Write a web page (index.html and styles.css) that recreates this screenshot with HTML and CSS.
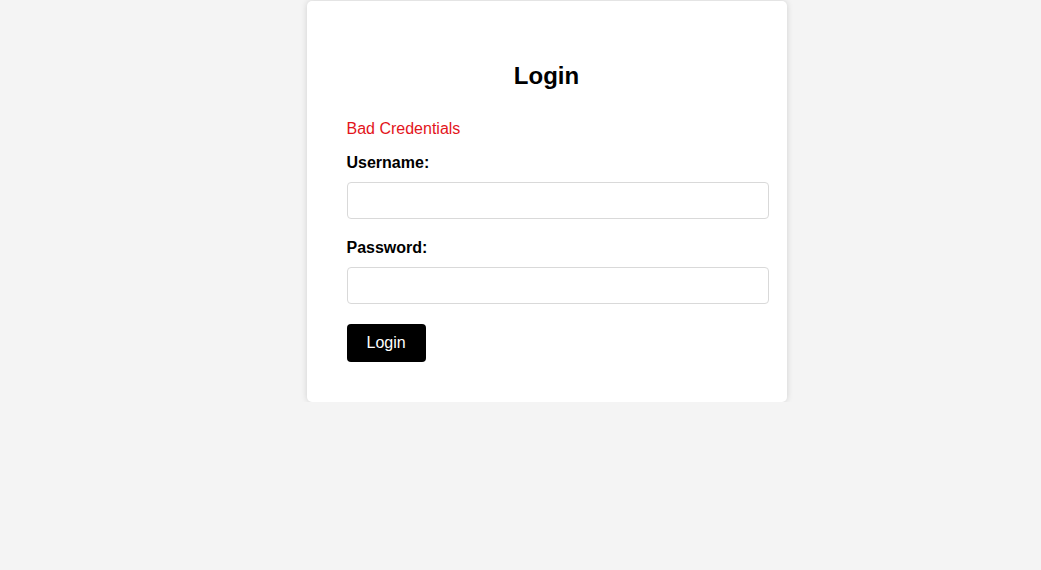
FILE: index.html
```html
<!DOCTYPE html>
<html lang="en">
<head>
<meta charset="utf-8">
<title>Login</title>
<link rel="stylesheet" href="styles.css">
</head>
<body>
<div class="card">
  <h2 class="title">Login</h2>
  <div class="error">Bad Credentials</div>
  <form class="form">
    <label class="label" for="username">Username:</label>
    <input class="input" type="text" id="username" name="username">
    <label class="label" for="password">Password:</label>
    <input class="input" type="password" id="password" name="password">
    <button class="btn" type="button">Login</button>
  </form>
</div>
</body>
</html>
```

FILE: styles.css
```css
html, body {
  margin: 0;
  padding: 0;
}
body {
  background: #f4f4f4;
  font-family: "Liberation Sans", Arial, sans-serif;
  font-size: 16px;
  color: #000;
  padding-top: 1px;
}
.card {
  width: 400px;
  margin: 0 0 0 calc(50% - 214px);
  padding: 40px;
  background: #fff;
  border-radius: 5px;
  box-shadow: 0 0 6px rgba(0, 0, 0, 0.15);
}
.title {
  margin: 21px 0 30px;
  font-size: 24px;
  font-weight: bold;
  text-align: center;
  line-height: 28px;
}
.error {
  color: #e3141b;
  line-height: 18px;
  margin-bottom: 16px;
}
.form {
  display: flex;
  flex-direction: column;
  align-items: flex-start;
}
.label {
  font-weight: bold;
  line-height: 18px;
  margin-bottom: 10px;
}
.input {
  width: 400px;
  padding: 10px;
  height: 15px;
  border: 1px solid #d9d9d9;
  border-radius: 4px;
  margin: 0 0 20px;
  font-family: "Liberation Sans", Arial, sans-serif;
  font-size: 13px;
  background: #fff;
}
.btn {
  background: #000;
  color: #fff;
  border: none;
  border-radius: 4px;
  padding: 10px 20px;
  font-family: "Liberation Sans", Arial, sans-serif;
  font-size: 16px;
  line-height: 18px;
  cursor: pointer;
}
```
